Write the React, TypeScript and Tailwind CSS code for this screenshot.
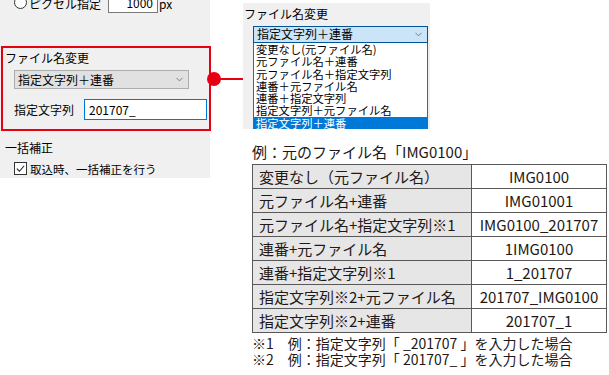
import { ChevronDown } from "lucide-react";

const jp = "font-['Noto_Sans_CJK_JP','Noto_Sans',sans-serif]";

const options = [
  "変更なし(元ファイル名)",
  "元ファイル名＋連番",
  "元ファイル名＋指定文字列",
  "連番＋元ファイル名",
  "連番＋指定文字列",
  "指定文字列＋元ファイル名",
  "指定文字列＋連番",
];

const rows = [
  ["変更なし（元ファイル名）", "IMG0100"],
  ["元ファイル名+連番", "IMG01001"],
  ["元ファイル名+指定文字列※1", "IMG0100_201707"],
  ["連番+元ファイル名", "1IMG0100"],
  ["連番+指定文字列※1", "1_201707"],
  ["指定文字列※2+元ファイル名", "201707_IMG0100"],
  ["指定文字列※2+連番", "201707_1"],
];

function SettingsPanel() {
  return (
    <div className="w-[210px] h-[178px] bg-[#f0f0f0] text-[12px] leading-[12px] text-black flex flex-col">
      {/* cut off row at the top */}
      <div className="h-[13px] overflow-hidden flex items-end pl-[14px]">
        <span className="w-[13px] h-[13px] rounded-full border border-[#333] bg-white mb-[4px]" />
        <span className="ml-[2px] mb-[3px]">ピクセル指定</span>
        <div className="ml-[7px] w-[50px] h-[20px] border border-[#7a7a7a] bg-white flex items-end justify-end pr-[4px] pb-[3px]">
          1000
        </div>
        <span className="ml-[1px] mb-[3px]">px</span>
      </div>
      <div className="mt-[33px] ml-[1px] w-[210px] h-[85px] border-2 border-[#e60012] flex flex-col">
        <div className="mt-[4px] ml-[2px]">ファイル名変更</div>
        <div className="mt-[6px] ml-[11px] w-[175px] h-[19px] bg-[#e1e1e1] border border-[#adadad] flex items-center justify-between px-[3px]">
          <span>指定文字列＋連番</span>
          <ChevronDown className="w-[11px] h-[11px] text-[#555]" strokeWidth={1.5} />
        </div>
        <div className="mt-[10px] ml-[11px] flex items-center">
          <span>指定文字列</span>
          <div className="ml-[10px] w-[123px] h-[21px] bg-white border border-[#0078d7] flex items-center pl-[4px]">
            201707_
          </div>
        </div>
      </div>
      <div className="mt-[11px] ml-[5px]">一括補正</div>
      <div className="mt-[8px] ml-[14px] flex items-center">
        <span className="w-[13px] h-[13px] border border-[#333] bg-white flex items-center justify-center">
          <svg viewBox="0 0 12 12" className="w-[11px] h-[11px]">
            <path d="M2 6.2 L4.8 9 L10 3" fill="none" stroke="#222" strokeWidth="1.2" />
          </svg>
        </span>
        <span className="ml-[3px] text-[11.5px]">取込時、一括補正を行う</span>
      </div>
    </div>
  );
}

function DropdownShot() {
  return (
    <div className="mt-[3px] w-[187px] h-[126px] bg-[#f0f0f0] text-[12px] leading-[12px] text-black flex flex-col">
      <div className="mt-[5px] ml-[1px]">ファイル名変更</div>
      <div className="mt-[6px] ml-[10px] w-[175px] h-[19px] bg-[#cce4f7] border border-[#005499] flex items-center justify-between px-[3px]">
        <span>指定文字列＋連番</span>
        <ChevronDown className="w-[11px] h-[11px] text-[#555]" strokeWidth={1.5} />
      </div>
      <div className="ml-[10px] w-[175px] bg-white border-x border-[#0078d7] flex flex-col text-[11.3px] leading-[12.3px]">
        {options.map((o, i) => (
          <div
            key={o}
            className={
              i === options.length - 1
                ? "h-[12.3px] bg-[#0078d7] text-white pl-[2px] whitespace-nowrap"
                : "h-[12.3px] pl-[2px] whitespace-nowrap"
            }
          >
            {o}
          </div>
        ))}
      </div>
    </div>
  );
}

function ExampleTable() {
  return (
    <div className="ml-[9px] mt-[14px] text-[#231815] flex flex-col">
      <div className="text-[15px] leading-[18px]">例：元のファイル名「IMG0100」</div>
      <table className="mt-[3px] w-[355px] border-collapse leading-[16px]">
        <tbody>
          {rows.map(([a, b]) => (
            <tr key={a} className="h-[24px]">
              <td className="w-[219px] bg-[#e6e6e6] border border-[#595757] pl-[6px] text-[15px] whitespace-nowrap">{a}</td>
              <td className="bg-white border border-[#595757] text-center text-[15px] whitespace-nowrap">{b}</td>
            </tr>
          ))}
        </tbody>
      </table>
      <div className="mt-[2px] text-[14px] leading-[16px] whitespace-nowrap">※1　例：指定文字列「 _201707 」を入力した場合</div>
      <div className="text-[14px] leading-[16px] whitespace-nowrap">※2　例：指定文字列「 201707_ 」を入力した場合</div>
    </div>
  );
}

export default function App() {
  return (
    <div className={`relative w-[609px] h-[375px] bg-white overflow-hidden flex ${jp}`}>
      <SettingsPanel />
      <div className="ml-[33px] flex flex-col">
        <DropdownShot />
        <ExampleTable />
      </div>
      {/* pointer from the settings box to the dropdown */}
      <span className="absolute left-[207px] top-[72px] w-[14px] h-[14px] rounded-full bg-[#e60012]" />
      <span className="absolute left-[214px] top-[78px] w-[29px] h-[2px] bg-[#e60012]" />
    </div>
  );
}
